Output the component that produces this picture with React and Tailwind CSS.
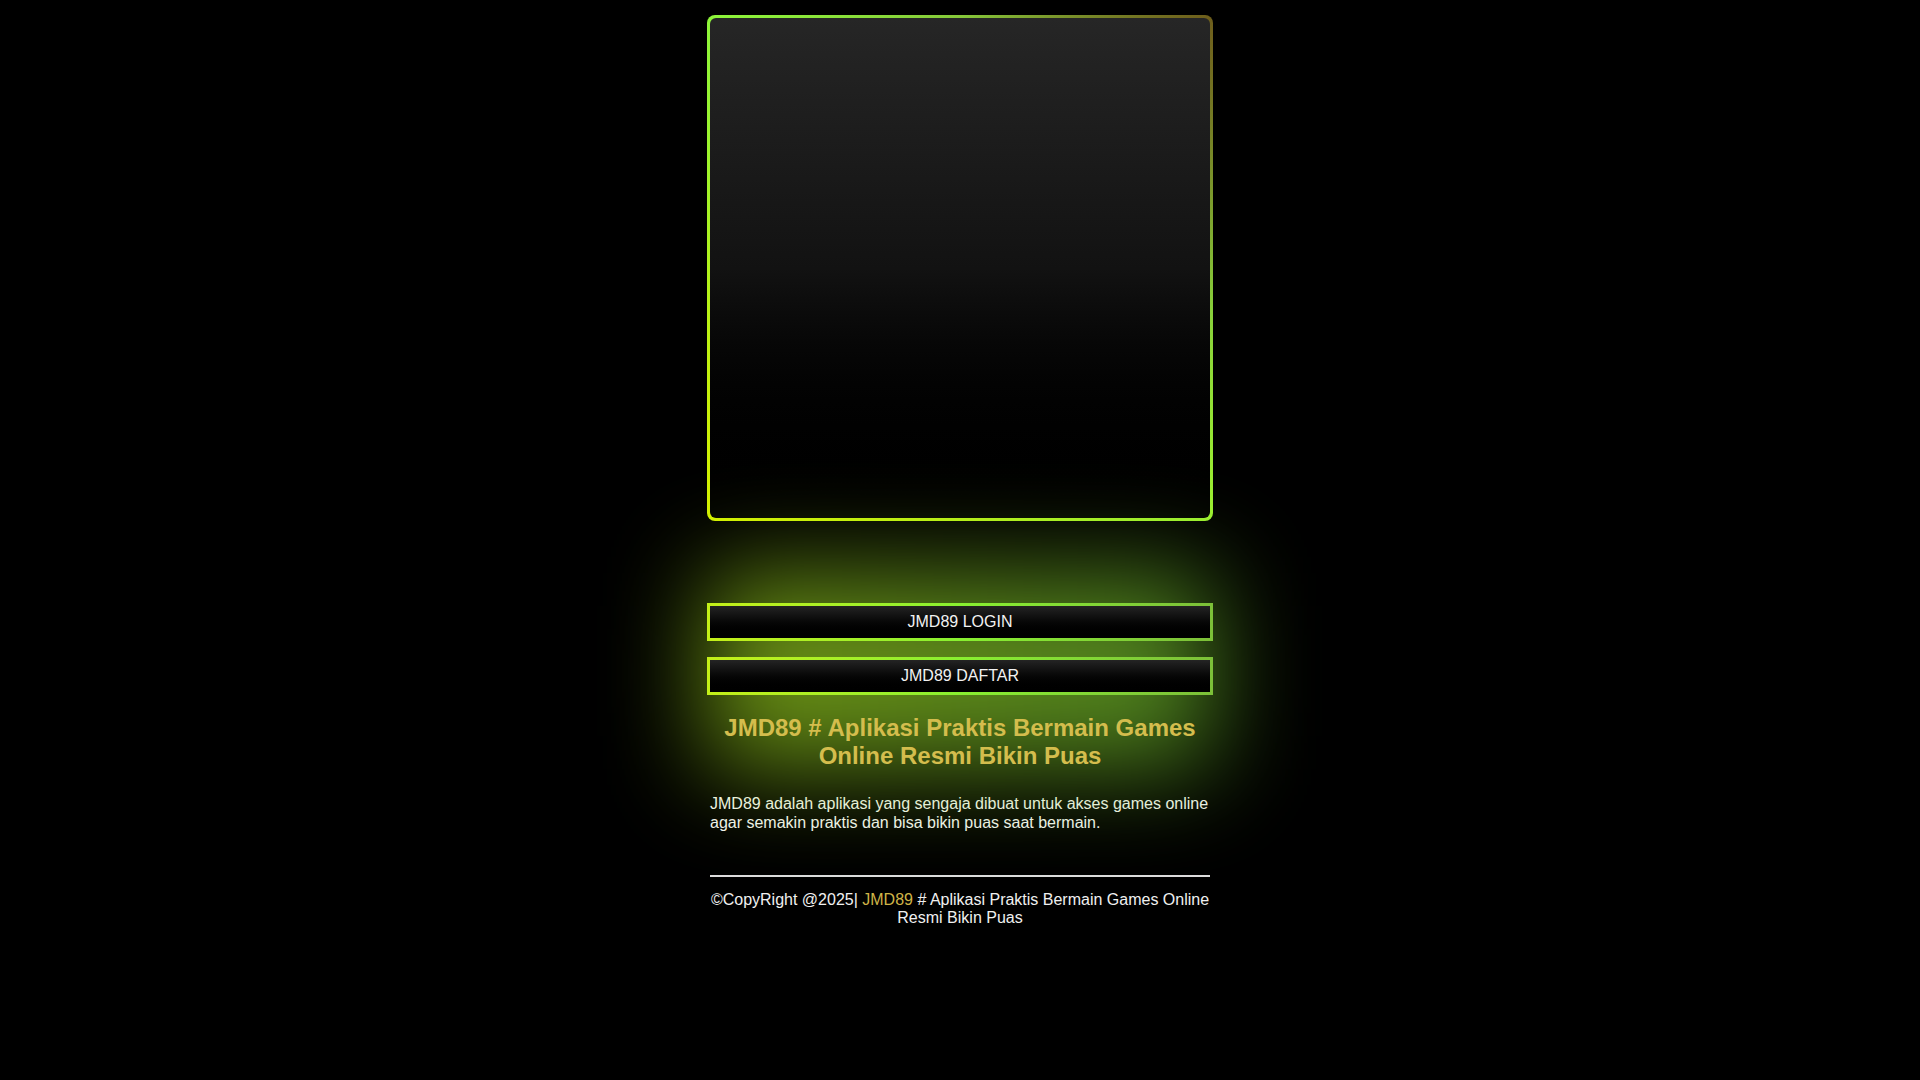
import React from 'react';

// Landing page: framed banner, two CTA buttons, title, blurb and footer

const buttons = ['JMD89 LOGIN', 'JMD89 DAFTAR'];

function GlowButton({ label }) {
  return (
    <a
      href="#"
      className="block h-[38px] p-[3px] bg-linear-to-r from-[#c4f018] via-[#88f030] to-[#7cc038]"
    >
      <span className="flex h-full w-full items-center justify-center bg-linear-to-b from-[#242424] to-black text-[16px] text-[#f2f2f2]">
        {label}
      </span>
    </a>
  );
}

export default function App() {
  return (
    <div className="min-h-screen bg-black font-['Liberation_Sans',Arial,sans-serif]">
      <div className="mx-auto w-[506px] pt-[15px]">
        {/* banner frame */}
        <div className="h-[506px] rounded-[8px] p-[3px] bg-[conic-gradient(from_0deg,#86c83a_0deg,#6e5e1c_45deg,#88d03a_100deg,#9cf030_135deg,#d4f000_225deg,#8ef53a_315deg,#86c83a_360deg)]">
          <div className="h-full w-full rounded-[6px] bg-linear-to-b from-[#262626] via-[#121212] to-black" />
        </div>

        <div className="relative mt-[82px]">
          {/* soft green glow behind the buttons and title */}
          <div className="pointer-events-none absolute -top-[30px] bottom-0 left-0 right-0 bg-linear-to-r from-[#b4f01e] to-[#7cd434] opacity-60 blur-[50px]" />

          <div className="relative flex flex-col gap-4">
            {buttons.map(b => (
              <GlowButton key={b} label={b} />
            ))}
          </div>

          <h1 className="relative mt-[19px] px-[3px] text-center text-[24px] font-bold leading-[1.15] text-[#d4bd4d]">
            JMD89 # Aplikasi Praktis Bermain Games Online Resmi Bikin Puas
          </h1>
        </div>

        <div className="px-[3px]">
          <p className="mt-[26px] text-[16px] leading-[1.15] text-[#f2f2f2]">
            JMD89 adalah aplikasi yang sengaja dibuat untuk akses games online agar semakin praktis dan bisa bikin puas saat bermain.
          </p>

          <div className="mt-[43px] h-[2px] bg-[#dcdcdc]" />

          <p className="mt-[14px] text-center text-[16px] leading-[1.15] text-[#f0f0f0]">
            ©CopyRight @2025| <a href="#" className="text-[#cfb447]">JMD89</a> # Aplikasi Praktis Bermain Games Online Resmi Bikin Puas
          </p>
        </div>
      </div>
    </div>
  );
}
